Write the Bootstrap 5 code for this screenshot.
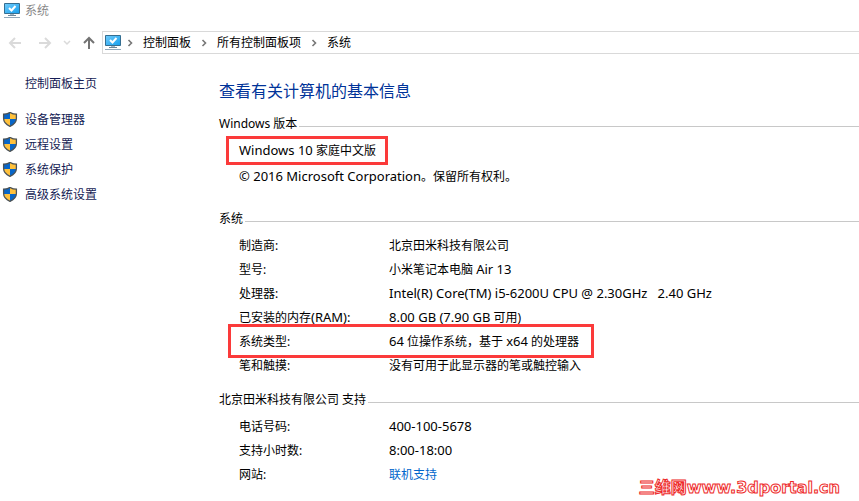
<!DOCTYPE html>
<html lang="zh-CN">
<head>
<meta charset="utf-8">
<meta name="viewport" content="width=device-width, initial-scale=1">
<title>系统</title>
<link href="https://cdn.jsdelivr.net/npm/bootstrap@5.3.0/dist/css/bootstrap.min.css" rel="stylesheet">
<style>
body{font-family:"Noto Sans","Noto Sans CJK SC",sans-serif;font-size:12px;line-height:24px;color:#000;background:#fff}
.window{min-height:100vh}
.title-bar{height:22px;padding-left:4px;gap:5px;color:#888}
.nav-bar{margin-top:9px;padding-left:8px}
.tool{border:0;background:none;padding:0;line-height:0;width:14px;color:#dadada}
.tool.up{color:#737373}
.address{height:23px;border:1px solid #d9d9d9;border-right:0;padding-left:2px;margin-left:6px;gap:10px}
.address .place{margin-right:-4px}
.address a{color:#000;text-decoration:none}
.side{width:219px;padding-top:18px}
.side a{color:#151c55;text-decoration:none}
.side .home{padding-left:25px;margin-bottom:11px}
.side .task{height:25px;padding-left:2px;gap:7px}
h1{font-size:16px;font-weight:400;line-height:24px;color:#039;margin:0 0 9px}
.content{padding-top:25px}
h2{font-size:12px;line-height:24px;margin:0;gap:2px}
h2::after{content:"";flex:1;border-top:1px solid #c8c8c8;margin-top:4px}
.latin{font-size:13px}
.edition{border:3px solid #fb3a3a;margin-left:7px;padding:0 9px 0 10px;line-height:23px}
.copyright{margin:0 0 19px 20px;line-height:22px}
.info{margin:2px 0 11px 20px}
.info th,.info td{font-weight:400;padding:0;height:24px;line-height:23px}
.info th{width:150px}
.marked{position:relative}
.marked::after{content:"";position:absolute;left:-11px;top:-5px;width:366px;height:34px;border:3px solid #fb3a3a;pointer-events:none}
.info a{color:#06c;text-decoration:none}
.site-mark{position:absolute;right:19px;bottom:1px;font:bold 16px/24px "DejaVu Sans","Noto Sans CJK SC",sans-serif;color:#fff;-webkit-text-stroke:1px #ee2929}
</style>
<script src="https://cdn.jsdelivr.net/npm/bootstrap@5.3.0/dist/js/bootstrap.bundle.min.js"></script>
</head>
<body>
<svg class="position-absolute" width="0" height="0" aria-hidden="true">
<defs><linearGradient id="screen" x2="1" y2="1"><stop stop-color="#72cbfa"/><stop offset="1" stop-color="#149fee"/></linearGradient></defs>
<symbol id="pc" viewBox="0 0 16 16"><path fill="url(#screen)" stroke="#356e91" d="M.5.5h15v10H.5z"/><path fill="none" stroke="#fff" stroke-width="2" d="m5 5 2.500 2.500L11.500 3"/><path fill="#a6b7c4" d="M6 11h4v1H6z"/><path fill="#6e8799" d="M4 12h8v1H4z"/><path fill="#91a8ba" d="M0 14h16v1H0z"/></symbol>
<symbol id="shield" viewBox="0 0 16 16"><path fill="#ffc13c" d="M8 0c2 1.400 4 2 6.400 2v4.500c0 3.500-2.400 6-6.400 7.800C4 12.500 1.600 10 1.600 6.500V2C4 2 6 1.400 8 0z"/><path fill="#0866c8" d="M8 0v7H1.600V2C4 2 6 1.400 8 0zM8 7h6.400c-.2 3.300-2.500 5.600-6.400 7.300z"/><path fill="none" stroke="#4b5257" stroke-width="1.300" d="M8 .4c2 1.200 4 1.800 6.400 1.800v4.300c0 3.500-2.400 6-6.400 7.800C4 12.500 1.600 10 1.600 6.500V2.200C4 2.200 6 1.600 8 .4z"/></symbol>
<symbol id="chev" viewBox="0 0 6 8"><path fill="none" stroke="#777" stroke-width="1.600" d="m1.500 1 3 3-3 3"/></symbol>
</svg>
<div class="window position-relative d-flex flex-column overflow-hidden">
<header>
<div class="title-bar d-flex align-items-center"><svg width="16" height="16" aria-hidden="true"><use href="#pc"/></svg><span>系统</span></div>
<div class="nav-bar d-flex align-items-center">
<button class="tool" aria-label="后退"><svg width="14" height="12" viewBox="0 0 14 12" fill="none" stroke="currentColor" stroke-width="2"><path d="M13 6H2M7 1 2 6l5 5"/></svg></button>
<button class="tool ms-3" aria-label="前进"><svg width="14" height="12" viewBox="0 0 14 12" fill="none" stroke="currentColor" stroke-width="2"><path d="M1 6h11M7 1l5 5-5 5"/></svg></button>
<button class="tool ms-2 me-2" aria-label="最近位置"><svg width="8" height="6" viewBox="0 0 8 6" fill="none" stroke="currentColor" stroke-width="1.500"><path d="m1 1 3 3 3-3"/></svg></button>
<button class="tool up" aria-label="上移"><svg width="14" height="14" viewBox="0 0 14 14" fill="none" stroke="currentColor" stroke-width="2"><path d="M7 13V2M2 7l5-5 5 5"/></svg></button>
<nav class="address d-flex align-items-center flex-grow-1" aria-label="地址">
<svg class="place" width="16" height="16" aria-hidden="true"><use href="#pc"/></svg>
<svg width="6" height="8" aria-hidden="true"><use href="#chev"/></svg><a href="#">控制面板</a>
<svg width="6" height="8" aria-hidden="true"><use href="#chev"/></svg><a href="#">所有控制面板项</a>
<svg width="6" height="8" aria-hidden="true"><use href="#chev"/></svg><a href="#">系统</a>
</nav>
</div>
</header>
<div class="d-flex flex-grow-1">
<aside class="side flex-shrink-0">
<div class="home"><a href="#">控制面板主页</a></div>
<a class="task d-flex align-items-center" href="#"><svg width="16" height="16" aria-hidden="true"><use href="#shield"/></svg>设备管理器</a>
<a class="task d-flex align-items-center" href="#"><svg width="16" height="16" aria-hidden="true"><use href="#shield"/></svg>远程设置</a>
<a class="task d-flex align-items-center" href="#"><svg width="16" height="16" aria-hidden="true"><use href="#shield"/></svg>系统保护</a>
<a class="task d-flex align-items-center" href="#"><svg width="16" height="16" aria-hidden="true"><use href="#shield"/></svg>高级系统设置</a>
</aside>
<main class="content flex-grow-1">
<h1>查看有关计算机的基本信息</h1>
<section>
<h2 class="d-flex align-items-center fw-normal">Windows 版本</h2>
<div class="edition d-inline-block"><span class="latin">Windows 10</span> 家庭中文版</div>
<p class="copyright"><span class="latin">© 2016 Microsoft Corporation</span>。保留所有权利。</p>
</section>
<section>
<h2 class="d-flex align-items-center fw-normal">系统</h2>
<table class="info"><tbody>
<tr><th scope="row">制造商:</th><td>北京田米科技有限公司</td></tr>
<tr><th scope="row">型号:</th><td>小米笔记本电脑 <span class="latin">Air 13</span></td></tr>
<tr><th scope="row">处理器:</th><td class="latin">Intel(R) Core(TM) i5-6200U CPU @ 2.30GHz &nbsp; 2.40 GHz</td></tr>
<tr><th scope="row">已安装的内存<span class="latin">(RAM):</span></th><td><span class="latin">8.00 GB (7.90 GB</span> 可用)</td></tr>
<tr><th scope="row" class="marked">系统类型:</th><td><span class="latin">64</span> 位操作系统，基于 <span class="latin">x64</span> 的处理器</td></tr>
<tr><th scope="row">笔和触摸:</th><td>没有可用于此显示器的笔或触控输入</td></tr>
</tbody></table>
</section>
<section>
<h2 class="d-flex align-items-center fw-normal">北京田米科技有限公司 支持</h2>
<table class="info"><tbody>
<tr><th scope="row">电话号码:</th><td class="latin">400-100-5678</td></tr>
<tr><th scope="row">支持小时数:</th><td class="latin">8:00-18:00</td></tr>
<tr><th scope="row">网站:</th><td><a href="#">联机支持</a></td></tr>
</tbody></table>
</section>
</main>
</div>
<div class="site-mark">三维网www.3dportal.cn</div>
</div>
</body>
</html>
